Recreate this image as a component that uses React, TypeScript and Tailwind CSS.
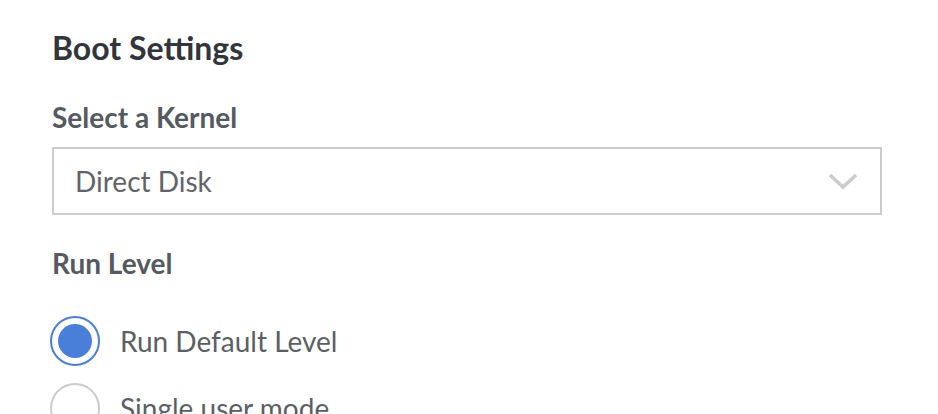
import React from "react";

export default function App() {
  return (
    <div className="w-[938px] h-[414px] overflow-hidden bg-white pl-[52px] pr-[56px] pt-[28px]" style={{ fontFamily: "Lato, 'Noto Sans', sans-serif" }}>
      <h2 className="text-[32px] leading-[40px] font-bold text-[#32363c]">Boot Settings</h2>
      <div className="mt-[32px] text-[28px] leading-[34px] font-bold text-[#555a60]">Select a Kernel</div>
      <div className="mt-[13px] h-[68px] border-2 border-[#cccccc] flex items-center justify-between pl-[21px] pr-[22px]">
        <span className="text-[28px] leading-[34px] text-[#606469]">Direct Disk</span>
        <svg width="30" height="18" viewBox="0 0 30 18">
          <path d="M2 3 L15 15 L28 3" fill="none" stroke="#cccccc" strokeWidth="3.5" />
        </svg>
      </div>
      <div className="mt-[31px] text-[28px] leading-[34px] font-bold text-[#555a60]">Run Level</div>
      <div className="mt-[36px] flex flex-col gap-[17px]">
        <label className="flex items-center gap-[20px]">
          <span className="w-[50px] h-[50px] rounded-full border-2 border-[#4a7fd9] flex items-center justify-center -ml-[2px]">
            <span className="w-[34px] h-[34px] rounded-full bg-[#4a7fd9]" />
          </span>
          <span className="text-[28px] leading-[34px] text-[#5b5f64]">Run Default Level</span>
        </label>
        <label className="flex items-center gap-[20px]">
          <span className="w-[50px] h-[50px] rounded-full border-2 border-[#cccccc] -ml-[2px]" />
          <span className="text-[28px] leading-[34px] text-[#5b5f64]">Single user mode</span>
        </label>
      </div>
    </div>
  );
}
